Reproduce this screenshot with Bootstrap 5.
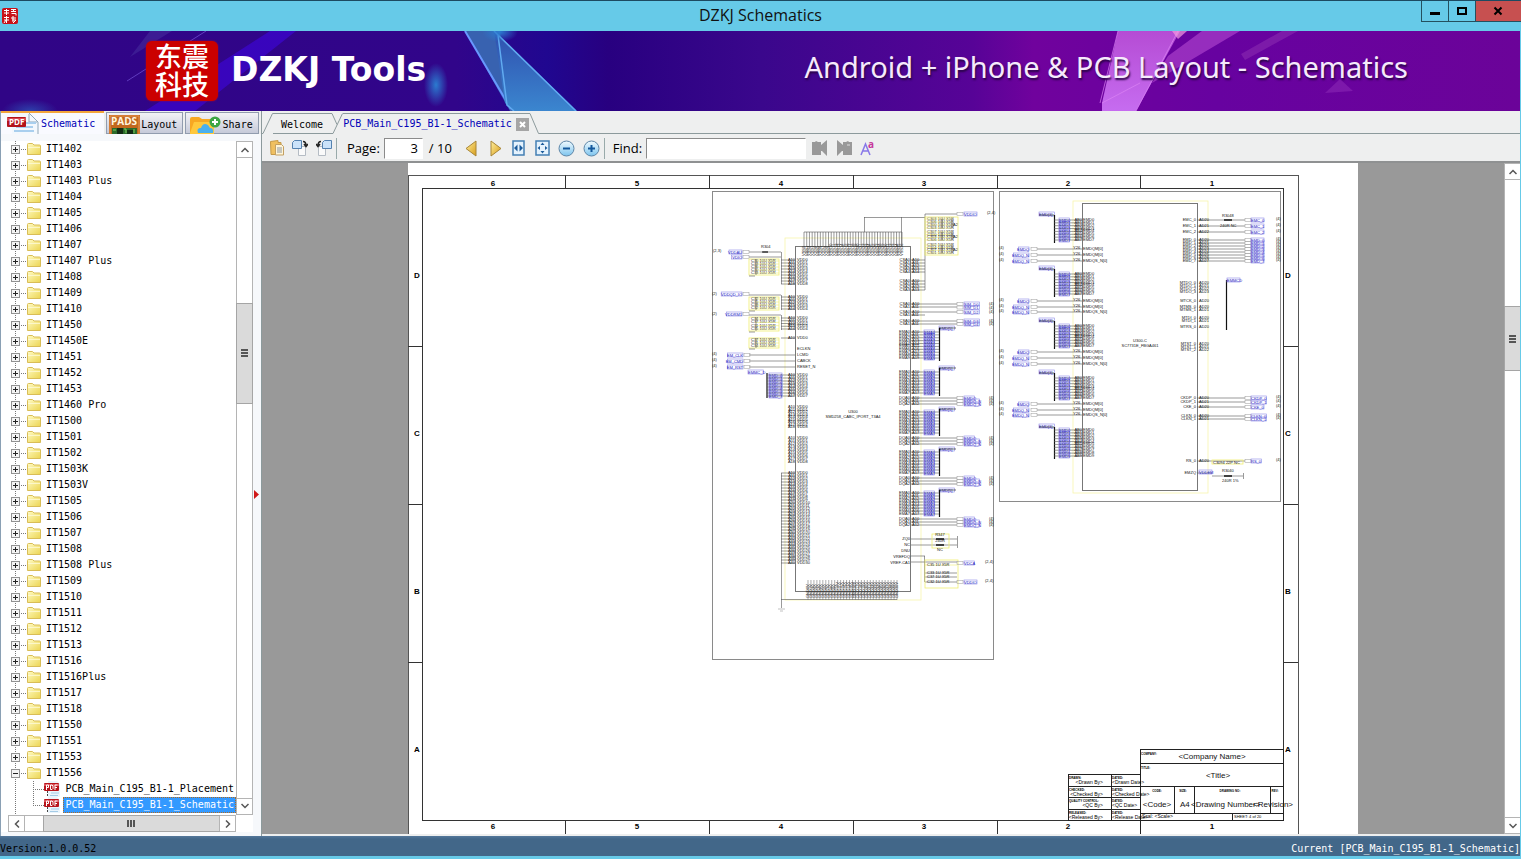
<!DOCTYPE html>
<html lang="en">
<head>
<meta charset="utf-8">
<meta name="viewport" content="width=device-width, initial-scale=1">
<title>DZKJ Schematics</title>
<link href="https://cdn.jsdelivr.net/npm/bootstrap@5.3.0/dist/css/bootstrap.min.css" rel="stylesheet">
<style>
:root{--sky:#66cae8;--face:#eeefef;--edge:#8c9a9c;--mono:"DejaVu Sans Mono","Liberation Mono",monospace;--ui:"Noto Sans","Open Sans",sans-serif}
body{background:var(--sky);font:10px/16px var(--mono);color:#000}
button{padding:0;border:0;background:none;color:inherit;font:inherit}
svg{display:block;flex:none}
ul{list-style:none;margin:0;padding:0}
.titlebar{height:31px;background:var(--sky);border-top:1px solid #1d4a61}
.titlebar h1{font:16px/28px "Open Sans",sans-serif;margin:0;color:#111}
.side-slot{width:100px}
.winbtns{height:21px;border:1px solid #24505f;border-top:0;border-right:0}
.winbtns button{width:27px;border-right:1px solid #24505f}
.winbtns button:last-child{width:45px;border:0;background:#c75050}
.banner{height:80px;background:#310589;margin-right:1px;overflow:hidden}
.banner-art{position:absolute;inset:0;width:100%;height:100%}
.brand{position:relative;padding-left:146px;gap:13px}
.brand-seal{width:72px;height:60px;border-radius:6px;background:#cb0000;color:#fff;font:500 27px/28px "Noto Sans CJK SC",sans-serif;text-align:center;padding-top:1px;box-shadow:0 0 2px #a00a30}
.brand-seal div{height:28px}
.brand-name{font:700 33px/40px "DejaVu Sans",sans-serif;color:#fff;padding-bottom:3px}
.slogan{position:relative;font:29px/40px var(--ui);color:#f6eafc;text-shadow:1px 2px 2px #2a0548;margin-right:112px;padding-bottom:9px}
.work{margin-right:1px;background:var(--face)}
.sidebar{width:262px;background:#f6f8fb;border-left:1px solid #8aa0b4;border-right:1px solid var(--edge)}
.tabs-left{height:23px;background:var(--face);gap:2px}
.tabs-left button{display:flex;align-items:center;height:22px;align-self:flex-end;border:1px solid #919cae;background:linear-gradient(#f2f2f6,#c6cad9);gap:1px;padding:3px 0 0 2px}
.tabs-left button.on{height:23px;background:#f9faff;border:0;border-top:2px solid #f3a53b;color:#0000b8;width:104px;padding:0 0 0 6px;gap:2px}
.tree{padding-left:7px;background:#fff}
.tree-wrap{margin:7px 8px 4px 0;background:#fff}
.tree li{height:16px;display:flex;align-items:center;white-space:nowrap}
.tree a{color:#000;text-decoration:none;padding:0 2px;margin-left:3px;line-height:16px}
.tree a.on{background:#3399ff;color:#fff;outline:1px dotted #b06a20;outline-offset:-1px}
.stem{width:15px;height:16px;position:relative;margin-left:1px;background:repeating-linear-gradient(#777 0 1px,#fff 1px 2px) 6px 0/1px 100% no-repeat}
.stem button{display:block;width:9px;height:9px;margin:4px 0 0 2px}
.twig{width:5px;height:1px;background:repeating-linear-gradient(90deg,#777 0 1px,#fff 1px 2px);margin:0 1px 0 -3px}
.branch{width:12px;height:16px;margin:0 0 0 10px;background:repeating-linear-gradient(#777 0 1px,#fff 1px 2px) 0 0/1px 100% no-repeat,repeating-linear-gradient(90deg,#777 0 1px,#fff 1px 2px) 0 8px/100% 1px no-repeat}
.branch.end{background-size:1px 9px,100% 1px}
.vbar{width:17px;border:1px solid #b4b4b4;background:#fff}
.vbar button,.hbar button{display:flex;align-items:center;justify-content:center;flex:none}
.vbar button{height:16px;border-bottom:1px solid #b4b4b4}
.vbar button:last-child{border-bottom:0;border-top:1px solid #b4b4b4}
.thumb{background:#dadada;outline:1px solid #a5a5a5;display:flex;align-items:center;justify-content:center}
.grip{width:7px;height:8px;background:repeating-linear-gradient(#555 0 2px,transparent 2px 3px)}
.hbar{height:17px;margin:0 17px 0 7px;border:1px solid #b4b4b4;background:#fff}
.hbar button{width:16px;border-right:1px solid #b4b4b4}
.hbar button:last-child{border-right:0;border-left:1px solid #b4b4b4}
.hbar .grip{width:8px;height:7px;background:repeating-linear-gradient(90deg,#555 0 2px,transparent 2px 3px)}
.split-arrow{position:absolute;right:2px;top:379px}
.doctabs{height:23px}
.doctabs button{height:21px;border-top:1px solid var(--edge);margin-top:2px;line-height:22px}
.doctabs svg{margin-top:2px}
.base{border-bottom:1px solid var(--edge)}
.tool{height:27px;font:13px/27px "Open Sans",sans-serif;padding-top:1px}
.gap-s{margin-left:6px}.gap-m{margin-left:10px}.gap-l{margin-left:13px}
.tool input{height:21px;border:1px solid #fff;border-top-color:#8b8b8b;border-left-color:#8b8b8b;border-radius:0;padding:0;font:inherit;line-height:19px;background:#fff;outline:0}
.rule{width:1px;height:21px;background:#9aa}
.viewer{background:#999;border-top:2px solid #8f9192;margin-bottom:2px}
.viewer .vbar{width:16px;border-right:0}
.sheet{width:950px;height:671px;background:#fff}
.status{height:20px;background:linear-gradient(#54779a 0,#426789 3px);margin:0 1px 3px 0;line-height:26px;overflow:hidden}
</style>
</head>
<body>
<svg width="0" height="0" class="position-absolute" aria-hidden="true">
<defs>
<linearGradient id="gf" x2="1" y2="1"><stop stop-color="#fffbc4"/><stop offset="1" stop-color="#ecd552"/></linearGradient>
<linearGradient id="go" x2="1" y2="1"><stop stop-color="#fff0a0"/><stop offset="1" stop-color="#d89c18"/></linearGradient>
<linearGradient id="gb" x2="0" y2="1"><stop stop-color="#f2fbff"/><stop offset="1" stop-color="#7cc4ee"/></linearGradient>
<symbol id="fold" viewBox="0 0 14 12"><path d="M.5 11.500V1.500q0-1 1-1h4l1.500 1.500h5.500q1 0 1 1v8.500z" fill="url(#gf)" stroke="#d9bd57"/><path d="M1 4.500h12" stroke="#fffce0" opacity=".7"/></symbol>
<symbol id="plus" viewBox="0 0 9 9"><rect x=".5" y=".5" width="8" height="8" fill="#f4f4f4" stroke="#929292"/><path d="M2 4.500h5M4.500 2v5" stroke="#222"/></symbol>
<symbol id="minus" viewBox="0 0 9 9"><rect x=".5" y=".5" width="8" height="8" fill="#f4f4f4" stroke="#929292"/><path d="M2 4.500h5" stroke="#222"/></symbol>
<symbol id="pdf" viewBox="0 0 16 16"><path d="M4 0h9l3 3v13H4z" fill="#eaf4fb"/><path d="M7 12h8M6 14.500h8" stroke="#a4cbe6"/><path d="M3.500 10v6" stroke="#444" stroke-dasharray="2 1"/><rect y="2" width="15" height="8" rx="1" fill="#b8141c"/><path d="M0 3h15v2H0z" fill="#dc5058"/><path d="M2.500 9V4h2v2.500h-2M6.500 4v4.500h1.500l1-1V5L8 4zM11 9V4h2.500M11 6.500h2" fill="none" stroke="#fff"/></symbol>
<symbol id="up" viewBox="0 0 8 6"><path d="M.5 5 4 1.500 7.500 5" fill="none" stroke="#555" stroke-width="1.500"/></symbol>
<symbol id="down" viewBox="0 0 8 6"><path d="M.5 1 4 4.500 7.500 1" fill="none" stroke="#555" stroke-width="1.500"/></symbol>
</defs></svg>

<div class="d-flex flex-column vh-100 overflow-hidden">
<header class="titlebar d-flex justify-content-between flex-shrink-0">
  <div class="side-slot d-flex align-items-center" style="padding-left:2px"><svg width="16" height="16" viewBox="0 0 16 16"><rect width="16" height="16" rx="2" fill="#c8121a"/><path d="M2 2.500h5M4.500 1v6M2 5h5M9 1.500h5M9 3.500h5M11.500 1v3M9.500 5.500h4.500v2M2 9.500h5M4.500 8v7M2 12h5M9 10h5M11 8v6M10 12h4l-3 3M2 15l2-3" fill="none" stroke="#fff"/></svg></div>
  <h1>DZKJ Schematics</h1>
  <div class="side-slot d-flex justify-content-end align-items-start"><div class="winbtns d-flex">
    <button aria-label="Minimize"><svg class="mx-auto" width="12" height="12"><path d="M1 7h10v3H1z"/></svg></button>
    <button aria-label="Maximize"><svg class="mx-auto" width="12" height="12"><path d="M2 3h8v6H2z" fill="none" stroke="#000" stroke-width="2"/></svg></button>
    <button aria-label="Close"><svg class="mx-auto" width="12" height="12"><path d="M2.500 2.500l7 7M9.500 2.500l-7 7" stroke="#000" stroke-width="2"/></svg></button>
  </div></div>
</header>

<section class="banner position-relative d-flex align-items-center justify-content-between flex-shrink-0">
  <svg class="banner-art" viewBox="0 0 1520 80" preserveAspectRatio="none" aria-hidden="true">
    <defs><linearGradient id="bg"><stop stop-color="#300586"/><stop offset=".3" stop-color="#31058a"/><stop offset=".36" stop-color="#200790"/><stop offset=".4" stop-color="#280080"/><stop offset=".5" stop-color="#3a078c"/><stop offset=".64" stop-color="#570397"/><stop offset=".68" stop-color="#70029d"/><stop offset=".8" stop-color="#6702a0"/><stop offset="1" stop-color="#6b0399"/></linearGradient>
    <linearGradient id="tri" x2="0" y2="1"><stop stop-color="#2f4fae"/><stop offset="1" stop-color="#3b86cf"/></linearGradient>
    <linearGradient id="pk" x2="0" y2="1"><stop stop-color="#b54cd4"/><stop offset="1" stop-color="#c66cf0"/></linearGradient>
    <radialGradient id="glow"><stop stop-color="#2b7bd0"/><stop offset="1" stop-color="#2b7bd0" stop-opacity="0"/></radialGradient></defs>
    <path fill="url(#bg)" d="M0 0h1520v80H0z"/>
    <path d="M270 0h26L195 80h-50z" fill="#3d06d8" opacity=".65"/><path d="M150 0h22l-42 26z" fill="#47319f" opacity=".5"/>
    <path d="M206 0 127 50" stroke="#7654d8" opacity=".7"/>
    <ellipse cx="30" cy="80" rx="28" ry="12" fill="url(#glow)" opacity=".5"/>
    <ellipse cx="436" cy="54" rx="12" ry="22" fill="url(#glow)"/>
    <path d="M465 0h35l8 74 6 6h-4z" fill="#3862b0"/><path d="M465 0l46 78" stroke="#6898ff" stroke-width="2"/>
    <path d="M494 0 577 80H514l-9-8z" fill="url(#tri)"/><path d="M494 0 576 80M498 4l9 70 7 6" fill="none" stroke="#60aaf0" stroke-width="1.500"/>
    <ellipse cx="500" cy="1" rx="18" ry="10" fill="url(#glow)"/>
    <path d="M1118 0h62l-44 80h-34v-8z" fill="url(#pk)"/><path d="M1118 0l-18 72M1178 0l-42 80M1102 72l38-20" fill="none" stroke="#dc83f4" opacity=".7"/>
    <path d="M1202 0h38l-88 52 16-27z" fill="#b54bd2" opacity=".6"/><path d="M1282 0h16l-53 29-4-6z" fill="#8a2bb0" opacity=".6"/>
    <path d="M1340 48l13 12-28 2z" fill="#8a28b4" opacity=".6"/><path d="M1172 0l6 8 9-8" fill="#f49ae0" opacity=".7"/>
  </svg>
  <div class="brand d-flex align-items-center"><div class="brand-seal" lang="zh-CN"><div>东震</div><div>科技</div></div><div class="brand-name">DZKJ Tools</div></div>
  <div class="slogan">Android + iPhone &amp; PCB Layout - Schematics</div>
</section>

<main class="work d-flex flex-fill" style="min-height:0">
  <aside class="sidebar d-flex flex-column flex-shrink-0 position-relative">
    <nav class="tabs-left d-flex flex-shrink-0">
      <button class="on"><svg width="32" height="21" viewBox="0 0 32 21"><path d="M5 0h17l9 9v12H5z" fill="#f3f8fd"/><path d="M22 0l9 9v12M22 1v8h8" fill="none" stroke="#91a9b9"/><path d="M17 10h12M9 14h17M7 18h20" stroke="#a9cfee" stroke-width="2"/><rect y="4" width="19" height="10" rx="1" fill="#b3131b"/><path d="M0 5h19v3H0z" fill="#d94850"/><text x="2" y="12" font-family="Open Sans,sans-serif" font-weight="700" font-size="8" fill="#fff">PDF</text></svg>Schematic</button>
      <button style="width:77px"><svg width="31" height="19" viewBox="0 0 31 19"><path fill="#c2681e" d="M0 0h31v19H0z"/><path d="M1 19V1h29v18" fill="none" stroke="#e89450"/><text x="2" y="10" font-family="Open Sans,sans-serif" font-weight="700" font-size="10" fill="#fff6e0">PADS</text><path d="M3 13h25v6H3z" fill="#2c6b2a"/><path d="M8 13h6v6H8zM18 15h6v4h-6z" fill="#132c14"/><path d="M4 15h3M15 14h2v4M25 14v4" stroke="#7bd05c" fill="none"/></svg>Layout</button>
      <button style="width:75px"><svg style="margin-left:2px" width="32" height="18" viewBox="0 0 32 18"><path d="M0 18V3q0-2 2-2h7l3 2h10q2 0 2 2v13z" fill="#f7a823"/><path d="M0 17 4 6h20v12H0z" fill="#ffc83c"/><path d="M8 17q-2-5 3-5 2-6 7-3l2 3q4 0 3 5z" fill="#4bb0ee"/><circle cx="25" cy="6" r="5.500" fill="#3da644"/><path d="M25 3v6M22 6h6" stroke="#fff" stroke-width="2"/></svg>Share</button>
      <span class="flex-fill"></span>
    </nav>
    <div class="tree-wrap d-flex flex-column flex-fill" style="min-height:0">
      <div class="d-flex flex-fill" style="min-height:0">
        <ul class="tree flex-fill overflow-hidden" id="tree"></ul>
        <div class="vbar d-flex flex-column flex-shrink-0"><button aria-label="Scroll up"><svg width="8" height="6"><use href="#up"/></svg></button><span style="flex:146"></span><div class="thumb" style="flex:99"><i class="grip"></i></div><span style="flex:396"></span><button aria-label="Scroll down"><svg width="8" height="6"><use href="#down"/></svg></button></div>
      </div>
      <div class="hbar d-flex flex-shrink-0"><button aria-label="Scroll left"><svg width="6" height="8"><path d="M5 .5 1.500 4 5 7.500" fill="none" stroke="#555" stroke-width="1.500"/></svg></button><span style="flex:19"></span><div class="thumb" style="flex:176"><i class="grip"></i></div><button aria-label="Scroll right"><svg width="6" height="8"><path d="M1 .5 4.500 4 1 7.500" fill="none" stroke="#555" stroke-width="1.500"/></svg></button></div>
    </div>
    <svg class="split-arrow" width="5" height="9"><path d="M0 0l5 4.500L0 9z" fill="#d01818"/></svg>
  </aside>

  <section class="d-flex flex-column flex-fill" style="min-width:0">
    <nav class="doctabs d-flex flex-shrink-0">
      <svg width="11" height="21"><path d="M0 20.500h1L10.500.5h.5" fill="none" stroke="#8c9a9c"/></svg>
      <button class="base px-2">Welcome</button>
      <svg width="12" height="21"><path d="M0 .5h1l5 11M0 20.500h2L11.500.5" fill="none" stroke="#8c9a9c"/></svg>
      <button class="d-flex align-items-center text-nowrap" style="color:#0000b8">PCB_Main_C195_B1-1_Schematic<svg class="m-0 ms-1" width="13" height="13"><path fill="#a5a5a5" d="M0 0h13v13H0z"/><path d="M4 4l5 5M9 4l-5 5" stroke="#fff" stroke-width="2"/></svg></button>
      <svg width="11" height="21"><path d="M0 .5h1l8.500 20H11" fill="none" stroke="#8c9a9c"/></svg>
      <span class="base flex-fill"></span>
    </nav>
    <div class="tool d-flex align-items-center flex-shrink-0">
      <button class="ms-2" aria-label="Open"><svg width="14" height="16"><path d="M.5 1.500 8 .5v2h3v12H1z" fill="#f0c060" stroke="#c69a48"/><path d="M5.500 4.500h6l2 2v8.500H5.500z" fill="#fff5d8" stroke="#c3a063"/><path d="M7 8h5M7 10h5M7 12h5" stroke="#8c97a3"/></svg></button>
      <button class="ms-2" aria-label="Rotate right"><svg width="16" height="16"><path d="M6.500 6.500h7v9h-7z" fill="#fafafa" stroke="#b5bcc4"/><path d="M.5 2.500l2-2h7v8h-9z" fill="#cbe3fa" stroke="#5582b0"/><path d="M11 1.500q3 0 3 4M12 4l2 2.500L16 4" fill="none" stroke="#222" stroke-width="1.500"/></svg></button>
      <button class="ms-2" aria-label="Rotate left"><svg width="16" height="16"><path d="M2.500 6.500h7v9h-7z" fill="#fafafa" stroke="#b5bcc4"/><path d="M6.500 2.500l2-2h7v8h-9z" fill="#cbe3fa" stroke="#5582b0"/><path d="M5 1.500q-3 0-3 4M0 4l2 2.500L4 4" fill="none" stroke="#222" stroke-width="1.500"/></svg></button>
      <span class="rule ms-1"></span>
      <label class="gap-m" for="pg">Page:</label><input id="pg" value="3" class="text-end pe-1 ms-1" style="width:39px"><span class="gap-s">/ 10</span>
      <button class="gap-l" aria-label="Previous page"><svg width="12" height="17"><path d="M11 1v15L1 8.500z" fill="url(#go)" stroke="#a88638"/></svg></button>
      <button class="gap-l" aria-label="Next page"><svg width="12" height="17"><path d="M1 1v15l10-7.500z" fill="url(#go)" stroke="#a88638"/></svg></button>
      <button class="gap-m" aria-label="Fit width"><svg width="13" height="16"><path d="M1 1h11v14H1z" fill="#e4f2fd" stroke="#4480b4" stroke-width="1.500"/><path d="M5.500 4.500v7L2 8zM7.500 4.500v7L11 8z" fill="#1c5c9c"/></svg></button>
      <button class="gap-m" aria-label="Fit page"><svg width="15" height="16"><path d="M1 1h13v14H1z" fill="#e4f2fd" stroke="#4480b4" stroke-width="1.500"/><path d="M7.500 2.500l2 2.500h-4zM7.500 13.500l2-2.500h-4zM2.500 8 5 6v4zM12.500 8 10 6v4z" fill="#1c5c9c"/></svg></button>
      <button class="ms-2" aria-label="Zoom out"><svg width="17" height="17"><circle cx="8.500" cy="8.500" r="7.500" fill="url(#gb)" stroke="#5f87a8"/><path d="M5 8.500h7" stroke="#14589c" stroke-width="2"/></svg></button>
      <button class="ms-2" aria-label="Zoom in"><svg width="17" height="17"><circle cx="8.500" cy="8.500" r="7.500" fill="url(#gb)" stroke="#5f87a8"/><path d="M5 8.500h7M8.500 5v7" stroke="#14589c" stroke-width="2"/></svg></button>
      <span class="rule ms-1"></span>
      <label class="ms-2" for="fd">Find:</label><input id="fd" class="ms-1" style="width:160px">
      <button class="gap-s" aria-label="Find previous"><svg width="15" height="16"><path d="M0 2h3l1-1 2 1h3v3l6-5v16l-5-5H9v4H0z" fill="#999"/></svg></button>
      <button class="gap-m" aria-label="Find next"><svg width="15" height="16"><path d="M15 2h-3l-1-1-2 1H6v3L0 0v16l5-5h1v4h9z" fill="#999"/><path d="M10 5h3" stroke="#ddd"/></svg></button>
      <button class="ms-2" aria-label="Match case"><svg width="16" height="20"><path d="M1 17 5.500 6 10 17M3 13h5" fill="none" stroke="#8878e8" stroke-width="1.500"/><text x="8" y="10" font-family="Open Sans,sans-serif" font-weight="700" font-size="10" fill="#c6389c">a</text></svg></button>
    </div>
    <div class="viewer d-flex flex-fill overflow-hidden" style="min-height:0">
      <div class="flex-fill d-flex justify-content-center overflow-hidden"><svg class="sheet" id="sheet" viewBox="408 163 950 671" font-family="Liberation Sans,sans-serif"></svg></div>
      <div class="vbar d-flex flex-column flex-shrink-0"><button aria-label="Page up"><svg width="8" height="6"><use href="#up"/></svg></button><span style="flex:128"></span><div class="thumb" style="flex:63"><i class="grip"></i></div><span style="flex:450"></span><button aria-label="Page down"><svg width="8" height="6"><use href="#down"/></svg></button></div>
    </div>
  </section>
</main>
<footer class="status d-flex justify-content-between flex-shrink-0"><span>Version:1.0.0.52</span><span class="text-white">Current [PCB_Main_C195_B1-1_Schematic]</span></footer>
</div>

<script src="https://cdn.jsdelivr.net/npm/bootstrap@5.3.0/dist/js/bootstrap.bundle.min.js"></script>
<script>
// Model folders
const models='1402,1403,1403 Plus,1404,1405,1406,1407,1407 Plus,1408,1409,1410,1450,1450E,1451,1452,1453,1460 Pro,1500,1501,1502,1503K,1503V,1505,1506,1507,1508,1508 Plus,1509,1510,1511,1512,1513,1516,1516Plus,1517,1518,1550,1551,1553,1556'.split(',');
const files=['PCB_Main_C195_B1-1_Placement','PCB_Main_C195_B1-1_Schematic'];
document.getElementById('tree').innerHTML=models.map(m=>{const open=m==='1556';
 return `<li><span class="stem"><button aria-label="${open?'Collapse':'Expand'} IT${m}"><svg width="9" height="9"><use href="#${open?'minus':'plus'}"/></svg></button></span><i class="twig"></i><svg width="14" height="12"><use href="#fold"/></svg><a href="#">IT${m}</a></li>`}).join('')
+files.map((f,i)=>`<li><span class="stem"></span><span class="branch ${i?'end':''}"></span><svg width="16" height="16"><use href="#pdf"/></svg><a href="#" class="${i?'on':''}">${f}</a></li>`).join('')
+'<li><span class="stem"></span><i class="twig"></i><svg width="14" height="12"><use href="#fold"/></svg></li>';

// Schematic sheet
let o='';
const K='#555',B='#1a18c0',Y='#f1ee70';
const L=(a,b,c,d,col=K,w=.6)=>o+=`<path d="M${a} ${b}L${c} ${d}" stroke="${col}" stroke-width="${w}"/>`;
const R=(a,b,c,d,col=K,w=1)=>o+=`<rect x="${a}" y="${b}" width="${c-a}" height="${d-b}" fill="none" stroke="${col}" stroke-width="${w}"/>`;
const esc=s=>s.replace(/</g,'&lt;');
const T=(x,y,s,t,anchor='start',col='#111',extra='')=>o+=`<text x="${x}" y="${y}" font-size="${s}" text-anchor="${anchor}" fill="${col}" ${extra}>${esc(t)}</text>`;
const seq=(a,b,n)=>Array.from({length:n},(_,i)=>a+(b-a)*i/(n-1||1));
const net=(x,y,t,anchor='start')=>{const w=t.length*2.6,l=anchor==='end'?x-w:x;R(l,y-2,l+w,y+2,'#8b88e6',.6);T(x,y+1.5,4,t,anchor,B)};
const port=(x,y)=>R(x,y-1.500,x+6,y+1.500,'#999',.5);
// frame
R(408.5,175.5,1298.5,840,'#555');R(422.5,188.5,1283.5,820.5,'#333');
[565.5,709.5,853.5,997.5,1140.5].forEach(x=>{L(x,175,x,188,'#333',1);L(x,820,x,834,'#333',1)});
[346.5,504.5,662.5].forEach(y=>{L(408,y,422,y,'#333',1);L(1283,y,1298,y,'#333',1)});
[493,637,781,924,1068,1212].forEach((x,i)=>{T(x,186,8,''+(6-i),'middle','#000','font-weight="700"');T(x,829,8,''+(6-i),'middle','#000','font-weight="700"')});
['D','C','B','A'].forEach((t,i)=>[417,1288].forEach(x=>T(x,278+158*i,8,t,'middle','#000','font-weight="700"')));
R(712.5,191.500,993.5,659.5,'#8a8a8a');R(999.5,191.500,1280.5,501.5,'#8a8a8a');
// first device
R(785,238,921,600,'#f7f5ac',.8);R(795.5,246.5,910.5,591.500,'#777');
seq(804,902,37).forEach((x,i)=>{L(x,232,x,247);T(0,0,4,'VSS'+i,'start','#222',`transform="translate(${x+1} 256) rotate(-90)"`)});
L(804,232,902,232);L(864.5,217,864.5,232);L(864,217.5,925,217.5);L(901.5,217,901.5,247);L(925,214,925,290);L(925,214,957,214);
port(957,214);net(964,214,'VDDIO');T(987,214,4,'(2,4)');
[[219,228],[232,240],[245,253]].forEach(([a,b])=>{seq(a,b,4).forEach(y=>{T(927,y+1,4,'C30'+(y|0)%9+'  10U  X5R');L(925,y,952,y,Y)});L(952,a,952,b,K);L(942,a,942,b,K,.8);T(953,(a+b)/2+2,4,'A2')});
R(925,217,958,255,Y,.8);
const padL=(a,b,n,wire)=>seq(a,b,n).forEach((y,i)=>{if(wire)L(781,y,795,y);T(795,y+1,4,'A'+(i+10),'end');T(797,y+1,4,'VDD'+i)});
const padR=(a,b,n,to,name='CS')=>seq(a,b,n).forEach((y,i)=>{if(to)L(911,y,to,y);T(910,y+1,4,name+'A'+i,'end');T(912,y+1,4,'A'+(i+10))});
padL(260,284,9,1);padL(297,309,5,1);padL(318,329,5,1);padL(338,338,1,1);padL(375,396,8,1);padL(407,427,9);padL(438,462,9);padL(473,563,31,1);
L(781.5,252,781.5,284);L(749,252,781,252);L(749,257,781,257);[[252,'VDDAU'],[257,'VDIO']].forEach(([y,t])=>{net(742,y,t,'end');port(743,y)});
T(713,252,4,'(2,3)');T(761,248,4,'R304');L(762,252,768,252,'#111',1.2);
[[259,275],[297,310],[317,331],[338,348]].forEach(([a,b])=>{R(749,a,779,b,Y,.8);seq(a+2,b-2,Math.max(2,(b-a)/3|0)).forEach(y=>{T(751,y+1,4,'C3'+(y|0)%9+'  10U  X5R');L(755,y,779,y,Y)});L(756,a,756,b,K);L(749,b+1,755,b+1)});
[[295,'VDDQD_IO'],[315,'VDDRM1']].forEach(([y,t])=>{L(749,y,781,y);L(781.5,y,781.5,y+15);net(742,y-1,t,'end');port(743,y-1);T(712,y,4,'(2)')});
[355,361,367].forEach((y,i)=>{L(749,y,795,y);net(743,y,['EM_CLK','EM_CMD','EM_RST'][i],'end');port(744,y);T(712,y,4,'(4)');T(797,y+1,4,['LCMD','CABCK','RESET_N'][i])});T(797,350,4,'ECLKN');
net(748,372,'EMMC_D');L(767,373,767,398,'#111',1.2);seq(375,396,8).forEach((y,i)=>{L(767,y,782,y);net(769,y,'EMD_'+i)});
L(781.5,473,781.5,608);L(781,599.5,897,599.5);L(778,609,785,609,'#999');L(780,611,783,611,'#999');
seq(808,897,31).forEach((x,i)=>{L(x,580,x,600,'#777');T(0,0,4,'GND'+i+'V','start','#222',`transform="translate(${x+1} 598) rotate(-90)"`)});
padR(260,272,5,925);padR(281,290,4,925);padR(304,307,2,957);padR(312,315,2,925);L(925,312,957,312);padR(321,324,2,957);
[304,307.500,312,321,324].forEach((y,i)=>{port(957,y);net(964,y,'SIM_D'+i);T(989,y+1,4,'(4)')});
[[328,332,358,10],[368,372,393,8],[409,412,433,8],[449,452,473,8],[490,493,514,8]].forEach(([t,a,b,n],k)=>{
 net(939,t,'EMD[5]');L(939,t,956,t,'#111');L(939.5,t,939.5,b+3,'#111',1.2);padR(a,b,n,939,'EM');seq(a,b,n).forEach((y,i)=>net(924,y,'EMA'+i));
 if(k){const s=b+5;padR(s,s+6,3,957,'DQ');[0,3,6].forEach((d,i)=>{port(957,s+d);net(964,s+d,i?'EMDQ_N':'EMDQ');T(989,s+d+1,4,'(4)')})}});
[539,545].forEach(y=>{L(911,y,957,y);T(910,y+1,4,y===539?'ZQ0':'NC','end');L(957.5,y-3,957.5,y+3);L(936,y,944,y,'#111',1.5)});R(932,534,949,548,Y,.8);T(940,536,4,'R347','middle');T(940,542,4,'240R','middle');T(940,551,4,'NC','middle');
T(910,552,4,'DNU','end');T(910,558,4,'VREFDQ','end');T(910,564,4,'VREF-CA1','end');L(911,556,925,556);L(911,562,957,562);L(924.5,556,924.5,582);
[565,573,577,582].forEach(y=>{L(925,y,957,y,y<570?Y:K);T(927,y+1,4,'C3'+y%10+'   1U   X5R')});R(925,560,958,588,Y,.8);
[[563,'VDCA'],[582,'VDDIO']].forEach(([y,t])=>{port(957,y);net(964,y,t);T(985,y,4,'(2,4)')});
T(853,413,4,'U300','middle');T(853,418,4,'SMD258_CABC_IPORT_T3A4','middle');
// second device
R(1073,201,1208,493,'#f7f5ac',.8);R(1082.500,203.5,1197.500,490.500,'#777');
const pad2=(a,b,n)=>seq(a,b,n).forEach((y,i)=>{L(1054,y,1082,y);net(1059,y,'EMD'+i);T(1082,y+1,4,'AB'+i,'end');T(1083,y+1,4,'EMD'+i)});
[214,268,320,372,426].forEach((y,k)=>{net(1039,y,'EMD[3]');L(1039,y+1,1054,y+1,'#111');L(1054.500,y+1,1054.500,y+(k>3?33:29),'#111',1.2);k>3?pad2(430,456,10):pad2(y+6,y+26,8)});
[[249,255,261],[301,307,312],[352,358,364],[404,410,415]].forEach(r=>r.forEach((y,i)=>{L(1037,y,1082,y);port(1031,y);net(1029,y,i?'EMDQ_N':'EMDQ','end');T(999,y,4,'(4)');T(1073,y,4,'Y26');T(1083,y+1,4,i===2?'EMDQS_N[0]':'EMDQM[0]')}));
const padQ=(a,b,n,name,wire)=>seq(a,b,n).forEach((y,i)=>{if(wire){L(1197,y,1245,y);port(1245,y);net(1251,y,name+'_'+i);T(1276,y,4,'(4)')}T(1196,y+1,4,name+'_'+i,'end');T(1199,y+1,4,'AD2'+i)});
padQ(220,232,3,'EMC',1);padQ(240,261,8,'EMD',1);padQ(283,292,4,'MTDO');padQ(301,301,1,'MTCK');padQ(307,310,2,'MTMS');padQ(318,321,2,'MTDI');padQ(327,327,1,'MTRS');padQ(344,350,3,'MTST');
padQ(398,402,2,'CKDP',1);padQ(407,407,1,'CKE',1);padQ(416,419,2,'CLKN',1);padQ(461,461,1,'RS',1);
T(1196,474,4,'EMZQ','end');L(1197,473,1212,473);net(1199,472,'VDDEM');L(1212,476,1243,476);L(1243.500,473,1243.500,479);L(1224,476,1232,476,'#111',1.5);
R(1212,460,1243,464,Y,.8);T(1213,464,4,'C3094   22P  NC');T(1222,472,4,'R3040');T(1222,482,4,'240R 1%');T(1222,217,4,'R3048');T(1220,227,4,'240R NC');L(1224,220,1232,220,'#111',1.5);
L(1226.500,280,1226.500,330,'#111',1.2);net(1227,280,'EMMCD');
T(1140,342,4,'U300-C','middle');T(1140,347,4,'SC7731E_FBGA461','middle');
// title block
R(1140.500,749.5,1283.500,820.500,'#222');R(1068.500,774.500,1140.500,820.500,'#222');
L(1140,763.500,1283,763.500,'#222',1);L(1140,786.500,1283,786.500,'#222',1);L(1140,813.500,1283,813.500,'#222',1);
[1174.500,1194.500,1270.500].forEach(x=>L(x,786,x,813,'#222',1));L(1232.500,813,1232.500,820,'#222',1);L(1111.500,774,1111.500,820,'#222',1);L(1140.500,820,1140.500,834,'#222',1);
[786.500,797.500,809.500].forEach(y=>L(1068,y,1140,y,'#222',1));
const b='font-weight="700"';
[['DRAWN:','<Drawn By>','<Drawn Date>'],['CHECKED:','<Checked By>','<Checked Date>'],['QUALITY CONTROL:','<QC By>','<QC Date>'],['RELEASED:','<Released By>','<Release Date>']].forEach(([h,p,d],i)=>{const y=779+i*12-(i>1?1:0);T(1069,y,3,h,'start','#000',b);T(1112,y,3,'DATED:','start','#000',b);T(1103,y+5,5,p,'end','#000');T(1112,y+5,5,d,'start','#000')});
T(1141,755,3,'COMPANY:','start','#000',b);T(1141,769,3,'TITLE:','start','#000',b);T(1157,792,3,'CODE:','middle','#000',b);T(1183,792,3,'SIZE:','middle','#000',b);T(1230,792,3,'DRAWING NO:','middle','#000',b);T(1275,792,3,'REV:','middle','#000',b);
T(1212,759,8,'<Company Name>','middle');T(1218,778,8,'<Title>','middle');T(1157,807,8,'<Code>','middle');T(1180,807,8,'A4');T(1191,807,8,'<Drawing Number>');T(1253,807,8,'<Revision>');
T(1142,818,5,'Scal: <Scale>','start','#000');T(1234,818,4,'SHEET:  4   of   20','start','#000');
document.getElementById('sheet').innerHTML=o;
</script>
</body>
</html>
